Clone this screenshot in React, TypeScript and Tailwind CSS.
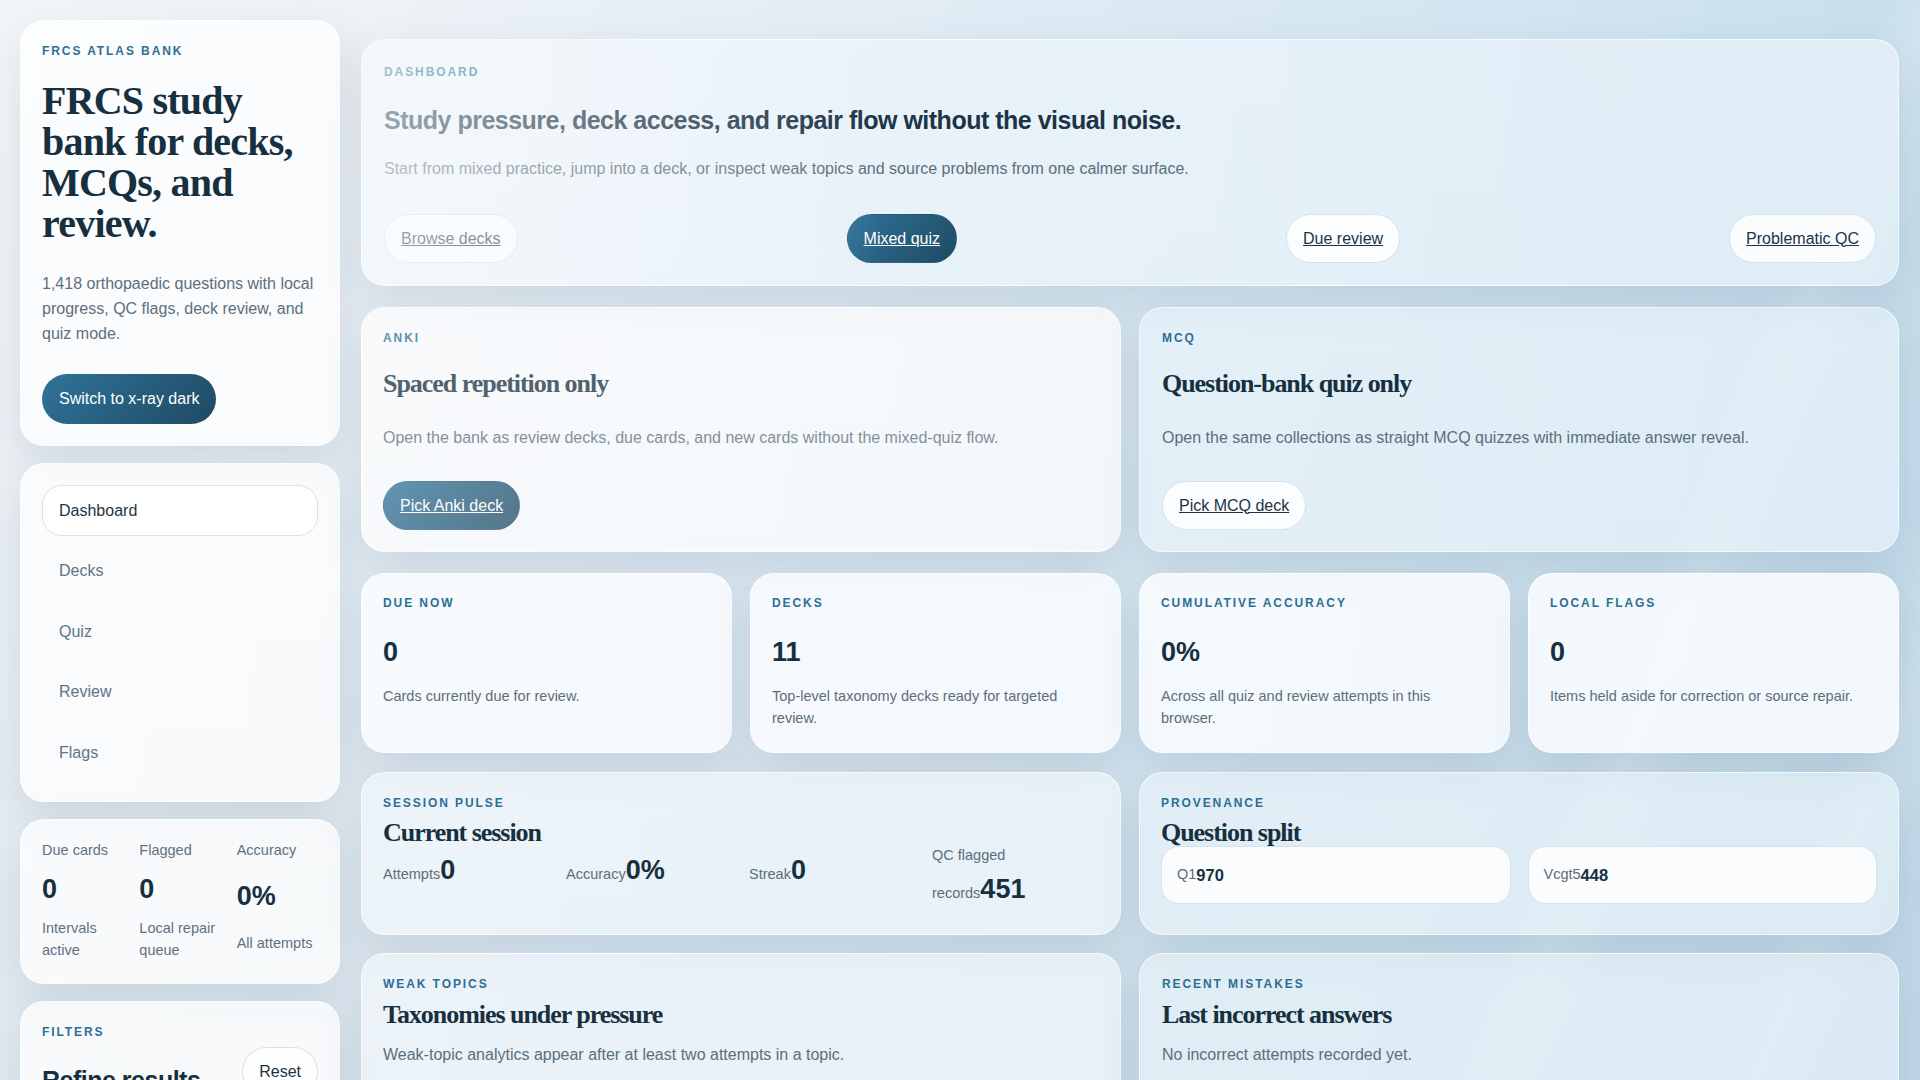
import React from "react";

const SERIF = "font-['Liberation_Serif','Times_New_Roman',serif]";

function Card({ className = "", children }: { className?: string; children?: React.ReactNode }) {
  return (
    <div
      className={`relative rounded-[24px] border border-white/70 shadow-[0_16px_40px_rgba(40,80,110,0.13)] ${className}`}
    >
      {children}
    </div>
  );
}

function Label({ children }: { children: React.ReactNode }) {
  return (
    <div className="text-[12px] font-bold uppercase leading-[16px] tracking-[0.16em] text-[#2c6f93]">
      {children}
    </div>
  );
}

function GhostButton({ children, underline = true }: { children: React.ReactNode; underline?: boolean }) {
  return (
    <span
      className={`inline-flex h-[49px] items-center rounded-full border border-[#d6e2ea] bg-white/85 px-[16px] text-[16px] text-[#1c3445] ${
        underline ? "underline" : ""
      }`}
    >
      {children}
    </span>
  );
}

function PrimaryButton({ children }: { children: React.ReactNode }) {
  return (
    <span className="inline-flex h-[49px] items-center rounded-full border border-transparent bg-[linear-gradient(135deg,#30739a,#1e4a62)] px-[16px] text-[16px] text-white underline">
      {children}
    </span>
  );
}

function StatCard({ label, value, sub }: { label: string; value: string; sub: string }) {
  return (
    <Card className="bg-[rgba(250,253,255,0.84)] px-[21px] pb-[23px] pt-[21px]">
      <Label>{label}</Label>
      <div className="mt-[24px] text-[27px] font-bold leading-[34px] text-[#17303f]">{value}</div>
      <p className="mt-[16px] text-[14.5px] leading-[22px] text-[#5c6e7b]">{sub}</p>
    </Card>
  );
}

export default function App() {
  return (
    <div className="relative h-screen w-full overflow-hidden bg-[linear-gradient(100deg,#f3f6f8_0%,#edf2f6_18%,#e3edf5_40%,#d8e8f2_62%,#cde2ef_82%,#c3dbea_100%)] font-['Liberation_Sans',Arial,sans-serif] text-[#17303f]">
      <div className="pointer-events-none absolute inset-0 bg-[linear-gradient(180deg,rgba(255,255,255,0)_0%,rgba(188,206,220,0.28)_100%)]" />
      <div className="pointer-events-none absolute inset-0 bg-[linear-gradient(112deg,transparent_0%,transparent_80%,rgba(255,255,255,0.16)_82%,transparent_85%,transparent_91%,rgba(255,255,255,0.14)_93%,transparent_96%)]" />
      <div className="relative flex items-start gap-[21px] pl-[20px] pr-[21px] pt-[20px]">
        {/* Sidebar */}
        <aside className="flex w-[320px] shrink-0 flex-col gap-[17px]">
          <Card className="bg-white/75 px-[21px] pb-[21px] pt-[22px]">
            <Label>FRCS Atlas Bank</Label>
            <h1
              className={`${SERIF} mt-[21px] text-[40px] font-bold leading-[41px] tracking-[-0.02em] text-[#17303f]`}
            >
              FRCS study bank for decks, MCQs, and review.
            </h1>
            <p className="mt-[27px] text-[16px] leading-[25px] text-[#5f6f7c]">
              1,418 orthopaedic questions with local progress, QC flags, deck review, and quiz mode.
            </p>
            <div className="mt-[28px] flex">
              <span className="inline-flex h-[50px] items-center rounded-full bg-[linear-gradient(135deg,#30739a,#1e4a62)] px-[17px] text-[16px] text-white">
                Switch to x-ray dark
              </span>
            </div>
          </Card>

          <Card className="flex flex-col gap-[9.5px] bg-white/75 px-[21px] pb-[23px] pt-[21px]">
            <div className="flex h-[51px] items-center rounded-[20px] border border-[#d6e2ea] bg-white px-[16px] text-[16px] text-[#1c3445]">
              Dashboard
            </div>
            {["Decks", "Quiz", "Review", "Flags"].map((n) => (
              <div
                key={n}
                className="flex h-[51px] items-center rounded-[20px] border border-transparent px-[16px] text-[16px] text-[#5f7586]"
              >
                {n}
              </div>
            ))}
          </Card>

          <Card className="bg-white/75 px-[21px] pb-[22px] pt-[19px]">
            <div className="grid grid-cols-3 gap-x-[16px] text-[14.5px] leading-[22px] text-[#5f7180]">
              <div>
                <div>Due cards</div>
                <div className="mt-[11px] text-[27px] font-bold leading-[34px] text-[#17303f]">0</div>
                <div className="mt-[11px]">Intervals active</div>
              </div>
              <div>
                <div>Flagged</div>
                <div className="mt-[11px] text-[27px] font-bold leading-[34px] text-[#17303f]">0</div>
                <div className="mt-[11px]">Local repair queue</div>
              </div>
              <div>
                <div>Accuracy</div>
                <div className="mt-[18px] text-[27px] font-bold leading-[34px] text-[#17303f]">0%</div>
                <div className="mt-[19px]">All attempts</div>
              </div>
            </div>
          </Card>

          <Card className="bg-white/75 px-[21px] pb-[24px] pt-[22px]">
            <Label>Filters</Label>
            <div className="mt-[7px] flex items-end justify-between">
              <h2 className="text-[25px] font-bold leading-[32px] tracking-[-0.02em] text-[#17303f]">
                Refine results
              </h2>
              <GhostButton underline={false}>Reset</GhostButton>
            </div>
            <div className="h-[120px]" />
          </Card>
        </aside>

        {/* Main */}
        <main className="grid min-w-0 flex-1 grid-cols-4 content-start gap-x-[18px] pt-[19px]">
          <Card className="col-span-4 overflow-hidden bg-[rgba(240,248,253,0.55)] px-[22px] pb-[22px] pt-[24px]">
            <Label>Dashboard</Label>
            <h1 className="mt-[24px] text-[25px] font-bold leading-[32px] tracking-[-0.02em] text-[#1c3445]">
              Study pressure, deck access, and repair flow without the visual noise.
            </h1>
            <p className="mt-[20px] text-[16px] leading-[25px] text-[#5c6e7b]">
              Start from mixed practice, jump into a deck, or inspect weak topics and source problems from one calmer
              surface.
            </p>
            <div className="mt-[33px] flex justify-between">
              <GhostButton>Browse decks</GhostButton>
              <PrimaryButton>Mixed quiz</PrimaryButton>
              <GhostButton>Due review</GhostButton>
              <GhostButton>Problematic QC</GhostButton>
            </div>
            <div className="pointer-events-none absolute inset-0 bg-[linear-gradient(90deg,rgba(247,250,252,0.6)_0%,rgba(247,250,252,0.32)_16%,rgba(247,250,252,0)_34%)]" />
          </Card>

          <Card className="col-span-2 mt-[21px] bg-white/70 px-[21px] pb-[21px] pt-[22px]">
            <div className="opacity-[0.75]">
              <Label>Anki</Label>
              <h2
                className={`${SERIF} mt-[22px] text-[26px] font-bold leading-[32px] tracking-[-0.04em] text-[#17303f]`}
              >
                Spaced repetition only
              </h2>
              <p className="mt-[25px] text-[16px] leading-[25px] text-[#5c6e7b]">
                Open the bank as review decks, due cards, and new cards without the mixed-quiz flow.
              </p>
              <div className="mt-[31px] flex">
                <PrimaryButton>Pick Anki deck</PrimaryButton>
              </div>
            </div>
          </Card>

          <Card className="col-span-2 mt-[21px] bg-[rgba(238,247,253,0.55)] px-[22px] pb-[21px] pt-[22px]">
            <Label>MCQ</Label>
            <h2
              className={`${SERIF} mt-[22px] text-[26px] font-bold leading-[32px] tracking-[-0.04em] text-[#17303f]`}
            >
              Question-bank quiz only
            </h2>
            <p className="mt-[25px] text-[16px] leading-[25px] text-[#5c6e7b]">
              Open the same collections as straight MCQ quizzes with immediate answer reveal.
            </p>
            <div className="mt-[31px] flex">
              <GhostButton>Pick MCQ deck</GhostButton>
            </div>
          </Card>

          <div className="col-span-4 mt-[21px] grid grid-cols-4 gap-x-[18px]">
            <StatCard label="Due now" value="0" sub="Cards currently due for review." />
            <StatCard label="Decks" value="11" sub="Top-level taxonomy decks ready for targeted review." />
            <StatCard
              label="Cumulative accuracy"
              value="0%"
              sub="Across all quiz and review attempts in this browser."
            />
            <StatCard label="Local flags" value="0" sub="Items held aside for correction or source repair." />
          </div>

          <Card className="col-span-2 mt-[19px] bg-[rgba(242,249,254,0.65)] px-[21px] pb-[22px] pt-[22px]">
            <Label>Session pulse</Label>
            <h2
              className={`${SERIF} mt-[7px] text-[26px] font-bold leading-[30px] tracking-[-0.04em] text-[#17303f]`}
            >
              Current session
            </h2>
            <div className="-mt-[11px] grid grid-cols-4 items-center gap-x-[16px] text-[14.5px] leading-[37.5px] text-[#5c6e7b]">
              <div>
                Attempts<span className="text-[27px] font-bold leading-none text-[#17303f]">0</span>
              </div>
              <div>
                Accuracy<span className="text-[27px] font-bold leading-none text-[#17303f]">0%</span>
              </div>
              <div>
                Streak<span className="text-[27px] font-bold leading-none text-[#17303f]">0</span>
              </div>
              <div>
                QC flagged records<span className="text-[27px] font-bold leading-none text-[#17303f]">451</span>
              </div>
            </div>
          </Card>

          <Card className="col-span-2 mt-[19px] bg-[rgba(238,247,253,0.55)] px-[21px] pb-[24px] pt-[22px]">
            <Label>Provenance</Label>
            <h2
              className={`${SERIF} mt-[7px] text-[26px] font-bold leading-[30px] tracking-[-0.04em] text-[#17303f]`}
            >
              Question split
            </h2>
            <div className="-mt-[2px] grid grid-cols-2 gap-x-[17px]">
              <div className="flex h-[58px] items-center rounded-[18px] border border-[#d6e2ea] bg-white/85 px-[15px]">
                <span className="text-[14.5px] text-[#5c6e7b]">Q1</span>
                <span className="text-[16.5px] font-bold text-[#17303f]">970</span>
              </div>
              <div className="flex h-[58px] items-center rounded-[18px] border border-[#d6e2ea] bg-white/85 px-[15px]">
                <span className="text-[14.5px] text-[#5c6e7b]">Vcgt5</span>
                <span className="text-[16.5px] font-bold text-[#17303f]">448</span>
              </div>
            </div>
          </Card>

          <Card className="col-span-2 mt-[18px] bg-[rgba(242,249,254,0.65)] px-[21px] pb-[24px] pt-[22px]">
            <Label>Weak topics</Label>
            <h2
              className={`${SERIF} mt-[8px] text-[26px] font-bold leading-[30px] tracking-[-0.04em] text-[#17303f]`}
            >
              Taxonomies under pressure
            </h2>
            <p className="mt-[12px] text-[16px] leading-[25px] text-[#5c6e7b]">
              Weak-topic analytics appear after at least two attempts in a topic.
            </p>
            <div className="h-[80px]" />
          </Card>

          <Card className="col-span-2 mt-[18px] bg-[rgba(238,247,253,0.55)] px-[22px] pb-[24px] pt-[22px]">
            <Label>Recent mistakes</Label>
            <h2
              className={`${SERIF} mt-[8px] text-[26px] font-bold leading-[30px] tracking-[-0.04em] text-[#17303f]`}
            >
              Last incorrect answers
            </h2>
            <p className="mt-[12px] text-[16px] leading-[25px] text-[#5c6e7b]">No incorrect attempts recorded yet.</p>
            <div className="h-[80px]" />
          </Card>
        </main>
      </div>
    </div>
  );
}
